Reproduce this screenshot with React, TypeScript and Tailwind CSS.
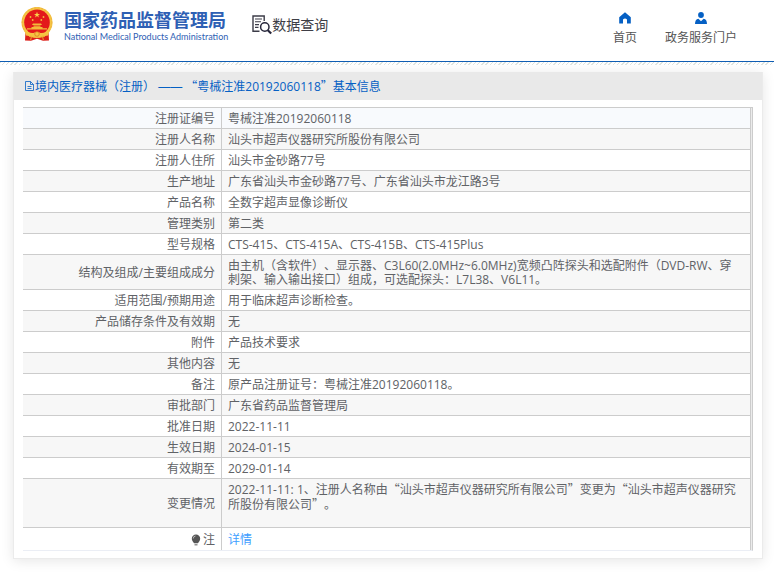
import React from 'react';

type Row = {
  label: string;
  value: React.ReactNode;
  tall?: boolean;
};

// Quotes take their full-width form from the CJK face
const Quoted: React.FC<{ children: React.ReactNode }> = ({ children }) => (
  <>
    <span className="font-['Noto_Sans_CJK_SC',sans-serif]">“</span>
    {children}
    <span className="font-['Noto_Sans_CJK_SC',sans-serif]">”</span>
  </>
);

const rows: Row[] = [
  { label: '注册证编号', value: '粤械注准20192060118' },
  { label: '注册人名称', value: '汕头市超声仪器研究所股份有限公司' },
  { label: '注册人住所', value: '汕头市金砂路77号' },
  { label: '生产地址', value: '广东省汕头市金砂路77号、广东省汕头市龙江路3号' },
  { label: '产品名称', value: '全数字超声显像诊断仪' },
  { label: '管理类别', value: '第二类' },
  { label: '型号规格', value: 'CTS-415、CTS-415A、CTS-415B、CTS-415Plus' },
  {
    label: '结构及组成/主要组成成分',
    value:
      '由主机（含软件）、显示器、C3L60(2.0MHz~6.0MHz)宽频凸阵探头和选配附件（DVD-RW、穿刺架、输入输出接口）组成，可选配探头：L7L38、V6L11。',
  },
  { label: '适用范围/预期用途', value: '用于临床超声诊断检查。' },
  { label: '产品储存条件及有效期', value: '无' },
  { label: '附件', value: '产品技术要求' },
  { label: '其他内容', value: '无' },
  { label: '备注', value: '原产品注册证号：粤械注准20192060118。' },
  { label: '审批部门', value: '广东省药品监督管理局' },
  { label: '批准日期', value: '2022-11-11' },
  { label: '生效日期', value: '2024-01-15' },
  { label: '有效期至', value: '2029-01-14' },
  {
    label: '变更情况',
    tall: true,
    value: (
      <>
        2022-11-11: 1、注册人名称由<Quoted>汕头市超声仪器研究所有限公司</Quoted>变更为
        <Quoted>汕头市超声仪器研究所股份有限公司</Quoted>。
      </>
    ),
  },
];

const Emblem: React.FC = () => (
  <svg viewBox="0 0 32 34" className="h-[34px] w-8 shrink-0" aria-hidden="true">
    <path d="M4.5 24h23l.5 9.5-6 .2-6-2-6 2-6-.2z" fill="#dc1f1a" />
    <circle cx="16" cy="15.5" r="15.5" fill="#f5c443" />
    <circle cx="16" cy="15.5" r="14.8" fill="none" stroke="#ebaf38" strokeWidth=".8" strokeDasharray="2 1.5" />
    <circle cx="16" cy="15.2" r="12.8" fill="#e3191b" />
    <path d="M16 4.8l.8 2.1h2.2l-1.8 1.3.7 2.2-1.900-1.300-1.900 1.300.7-2.200-1.800-1.300h2.200z" fill="#f8d24a" />
    <g fill="#f3bb3a">
      <circle cx="9.500" cy="10" r=".9" />
      <circle cx="11.700" cy="13" r=".9" />
      <circle cx="20.300" cy="13" r=".9" />
      <circle cx="22.500" cy="10" r=".9" />
      <path d="M12 16.500h8l1 1.500H11zM12.500 18.500h7v1.300h-7zM10.500 20h11v1.200H26v1.400H6v-1.400h4.500z" />
    </g>
    <path d="M3.500 24q5 2.500 9 2 3.500-2 7 0 4 .5 9-2L27 28.500q-4 1-7.500-.5-3.500 2.500-7 0-3.500 1.500-7.500.5z" fill="#f5c443" />
    <circle cx="16" cy="27" r="2.300" fill="#f5c443" stroke="#dc7a20" strokeWidth=".8" />
    <path d="M8 29.500l2.500-.5-.8 4M24 29.500l-2.500-.5.8 4" fill="none" stroke="#f0b732" strokeWidth=".9" />
  </svg>
);

const SearchDocIcon: React.FC = () => (
  <svg viewBox="0 0 20 20" className="h-5 w-5 shrink-0" fill="none" aria-hidden="true">
    <path d="M7.5 16.2H1V1h11.2v5" stroke="#3c3c48" strokeWidth="1.4" />
    <path d="M3 4h7M3 6.8h6M3 9.6h4M3 12.4h3.5" stroke="#3c3c48" strokeWidth="1.1" />
    <circle cx="12.8" cy="12" r="4.2" stroke="#26263a" strokeWidth="1.5" />
    <path d="M15.8 15.2l3.4 3.3" stroke="#26263a" strokeWidth="2.2" />
  </svg>
);

const HomeIcon: React.FC = () => (
  <svg viewBox="0 0 12 12" className="h-3 w-3" fill="#0560c4" aria-hidden="true">
    <path d="M6 0.3 L11.8 5.2 V11.5 H8 V7.4 Q6 5.8 4 7.4 V11.5 H0.2 V5.2 Z" />
  </svg>
);

const UserIcon: React.FC = () => (
  <svg viewBox="0 0 12 12" className="h-3 w-3" fill="#0560c4" aria-hidden="true">
    <circle cx="6" cy="3" r="2.9" />
    <path d="M0 12 Q0 7.3 3.4 6.7 L6 9.2 L8.6 6.7 Q12 7.3 12 12 Z" />
  </svg>
);

const DocIcon: React.FC = () => (
  <svg viewBox="0 0 11 12" className="h-3 w-[11px] shrink-0" fill="none" stroke="#0560c4" aria-hidden="true">
    <path d="M1.5 1.5h5l3 3v6h-8z M6.5 1.5v3h3 M3.5 6.5h4 M3.5 8.5h4" strokeWidth=".8" />
  </svg>
);

const BulbIcon: React.FC = () => (
  <svg viewBox="0 0 10 12" className="h-3 w-[10px]" aria-hidden="true">
    <path d="M5 .5a4.2 4.2 0 0 1 4.2 4.2c0 2-1.5 2.9-2.2 4.5H3C2.3 7.6.8 6.7.8 4.7A4.2 4.2 0 0 1 5 .5z" fill="#555" />
    <path d="M2.3 4.5A2.5 2.5 0 0 1 4.5 2" fill="none" stroke="#ddd" strokeWidth=".7" />
    <path d="M3.5 10.8h3" stroke="#777" strokeWidth="1.2" />
  </svg>
);

const Header: React.FC = () => (
  <header>
    <div className="flex h-[61px] items-start justify-between pr-[37px] pl-[21px]">
      <div className="flex pt-[7px]">
        <a href="#" className="flex gap-[11px]">
          <Emblem />
          <span className="flex flex-col pt-[3px] text-[#2e60b4]">
            <span className="text-[18px] leading-5 font-bold">国家药品监督管理局</span>
            <span className="font-['Lato',sans-serif] text-[9px] leading-[14px]">
              National Medical Products Administration
            </span>
          </span>
        </a>
        <a href="#" className="ml-6 flex h-9 items-center text-[14px] text-[#3e3e46]">
          <SearchDocIcon />
          数据查询
        </a>
      </div>
      <nav className="flex gap-7 pt-3 text-[#555555]">
        <a href="#" className="flex flex-col items-center gap-[6px]">
          <HomeIcon />
          <span className="leading-4">首页</span>
        </a>
        <a href="#" className="flex flex-col items-center gap-[6px]">
          <UserIcon />
          <span className="leading-4">政务服务门户</span>
        </a>
      </nav>
    </div>
    <div className="h-px bg-[#0f5db3]" />
    <div className="h-[3px] bg-[repeating-linear-gradient(135deg,#dfe5e0_0_1px,#ffffff_1px_3px)]" />
  </header>
);

const App: React.FC = () => {
  return (
    <div
      className="bg-white font-['Open_Sans','Noto_Sans_CJK_SC',sans-serif] text-[12px] leading-[14px] text-[#606266] [text-spacing-trim:space-all]"
      lang="zh-CN"
    >
      <Header />
      <main className="mt-[7px] mr-[11px] mb-4 ml-[13px] border border-t-0 border-[#ebebeb] bg-white shadow-[0_2px_12px_rgba(0,0,0,0.1)]">
        <h1 className="flex h-7 items-center bg-[#e9e9e9] pl-[10px] text-[#0560c4]">
          <DocIcon />
          <span>
            境内医疗器械（注册） <span className="font-['Liberation_Sans',sans-serif]">——</span>{' '}
            <Quoted>粤械注准20192060118</Quoted>基本信息
          </span>
        </h1>
        <div className="px-[9px] pt-[7px] pb-[7px]">
          <div className="border-t border-r border-b border-t-[#cccccc] border-r-[#cccccc] border-b-[#ebeef5] bg-[#ebebeb] pr-px">
            <table className="w-full table-fixed border-separate border-spacing-0 bg-white">
              <colgroup>
                <col className="w-[199px]" />
                <col />
              </colgroup>
              <tbody>
                {rows.map((row) => (
                  <tr
                    key={row.label}
                    className={`first:bg-[#f8fafd] even:bg-[#f7f7f7] ${row.tall ? 'h-[49px]' : 'h-[21px]'}`}
                  >
                    <th
                      scope="row"
                      className="border-r border-b border-[#cccccc] pt-1 pr-[6px] pb-0.5 text-right font-normal"
                    >
                      {row.label}
                    </th>
                    <td
                      className={`border-r border-b border-[#cccccc] pr-[10px] pb-0.5 pl-[6px] ${row.tall ? 'pt-[3px] align-top' : 'pt-1'}`}
                    >
                      {row.value}
                    </td>
                  </tr>
                ))}
                <tr className="h-[22px]">
                  <th scope="row" className="border-r border-[#cccccc] pt-1 pr-[6px] pb-0.5 font-normal">
                    <span className="flex items-center justify-end gap-0.5">
                      <BulbIcon />注
                    </span>
                  </th>
                  <td className="border-r border-[#cccccc] pt-1 pr-[10px] pb-0.5 pl-[6px]">
                    <a href="#" className="text-[#409eff]">
                      详情
                    </a>
                  </td>
                </tr>
              </tbody>
            </table>
          </div>
        </div>
      </main>
    </div>
  );
};

export default App;
